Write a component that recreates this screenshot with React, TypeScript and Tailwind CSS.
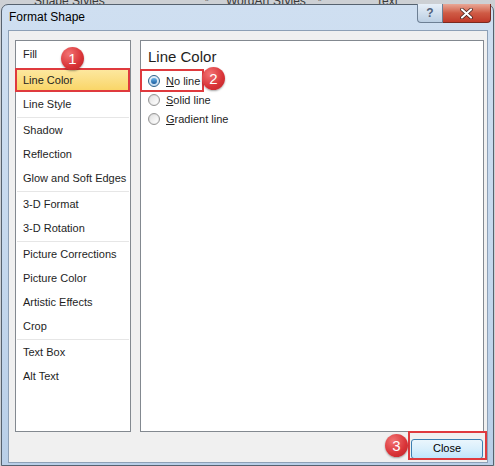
import React from "react";

const groups: string[][] = [
  ["Fill", "Line Color", "Line Style"],
  ["Shadow", "Reflection", "Glow and Soft Edges"],
  ["3-D Format", "3-D Rotation"],
  ["Picture Corrections", "Picture Color", "Artistic Effects", "Crop"],
  ["Text Box", "Alt Text"],
];

function Badge({ n, className }: { n: string; className: string }) {
  return (
    <div
      className={`absolute w-[23px] h-[23px] rounded-full flex items-center justify-center text-white text-[15px] leading-none shadow-[0_1px_2px_rgba(0,0,0,0.35)] bg-[radial-gradient(circle_at_35%_30%,#f27373,#d83236_60%,#b8252a)] ${className}`}
    >
      {n}
    </div>
  );
}

function Radio({ checked }: { checked?: boolean }) {
  if (checked) {
    return (
      <span className="w-[12px] h-[12px] rounded-full border border-[#2c628b] bg-gradient-to-b from-[#e6f0fa] to-[#c4dcf0] flex items-center justify-center shrink-0">
        <span className="w-[6px] h-[6px] rounded-full bg-gradient-to-b from-[#6ab6ea] to-[#1a5c9e]" />
      </span>
    );
  }
  return (
    <span className="w-[12px] h-[12px] rounded-full border border-[#979797] bg-gradient-to-br from-[#d5d5d5] to-[#f4f4f4] flex items-center justify-center shrink-0">
      <span className="w-[8px] h-[8px] rounded-full bg-gradient-to-br from-[#e2e2e2] to-[#ffffff]" />
    </span>
  );
}

export default function App() {
  return (
    <div
      className="relative w-[495px] h-[466px] overflow-hidden bg-[#cdd0d4]"
      style={{ fontFamily: '"Liberation Sans", Arial, sans-serif' }}
    >
      {/* ribbon labels behind the dialog */}
      <div className="absolute top-[-8px] left-0 w-full h-[14px] text-[12px] text-[#3a3a3a]">
        <span className="absolute left-[34px]">Shape Styles</span>
        <span className="absolute left-[205px] text-[10px]">▫</span>
        <span className="absolute left-[226px]">WordArt Styles</span>
        <span className="absolute left-[318px] text-[10px]">▫</span>
        <span className="absolute left-[376px]">Text</span>
      </div>

      {/* window */}
      <div className="relative ml-[1px] mt-[4px] w-[493px] h-[462px] rounded-t-[7px] border border-[#56626f] bg-gradient-to-b from-[#cfdff1] via-[#c6d9ee] to-[#b9cfe8] flex flex-col">
        {/* title bar */}
        <div className="h-[25px] flex items-start justify-between">
          <span className="ml-[7px] mt-[5px] text-[12px] text-black leading-[14px]">
            Format Shape
          </span>
          <div className="flex mr-[2px] -mt-[1px]">
            <div className="w-[26px] h-[19px] rounded-bl-[4px] border border-[#6d7f94] border-t-0 bg-gradient-to-b from-[#e7eff8] to-[#bccfe3] flex items-center justify-center text-[12px] font-bold text-[#50607a] leading-none">
              ?
            </div>
            <div className="w-[48px] h-[19px] rounded-br-[4px] border border-[#7a2a21] border-l-0 border-t-0 bg-gradient-to-b from-[#e8a796] via-[#cf5b45] to-[#c0392a] flex items-center justify-center">
              <svg width="13" height="11" viewBox="0 0 13 11">
                <path
                  d="M2 1.5 L11 9.5 M11 1.5 L2 9.5"
                  stroke="#3a1b17"
                  strokeWidth="3.6"
                  strokeLinecap="round"
                />
                <path
                  d="M2 1.5 L11 9.5 M11 1.5 L2 9.5"
                  stroke="#ffffff"
                  strokeWidth="2.2"
                  strokeLinecap="round"
                />
              </svg>
            </div>
          </div>
        </div>

        {/* client area */}
        <div className="ml-[6px] w-[480px] h-[433px] border border-[#8da0b6] bg-[#f0f0f0] flex flex-col pt-[9px] pl-[6px] pr-[3px]">
          <div className="flex gap-[9px] h-[392px]">
            {/* categories */}
            <div className="relative w-[116px] h-full border border-[#838990] bg-white pt-[1px] text-[11px] text-[#1e1e1e]">
              {groups.map((g, gi) => (
                <div
                  key={gi}
                  className={
                    gi < groups.length - 1
                      ? "pb-[1px] border-b border-[#e6e6e6] mx-[1px]"
                      : "mx-[1px]"
                  }
                >
                  {g.map((item) => {
                    const sel = item === "Line Color";
                    return (
                      <div
                        key={item}
                        className={`relative h-[24px] flex items-center pl-[6px] ${
                          sel
                            ? "mt-[2px] -mx-[1px] pl-[7px] bg-gradient-to-b from-[#fde9a3] to-[#f9d461]"
                            : ""
                        }`}
                      >
                        {item}
                        {sel && (
                          <div className="absolute left-[-1px] top-0 w-[115px] h-[24px] border-2 border-[#df3a3e]" />
                        )}
                      </div>
                    );
                  })}
                </div>
              ))}
              <Badge n="1" className="left-[45px] top-[6px]" />
            </div>

            {/* options */}
            <div className="relative flex-1 h-full border border-[#838990] bg-white pl-[7px] pt-[7px]">
              <div className="text-[15px] leading-[18px] text-[#1e1e1e]">
                Line Color
              </div>
              <div className="mt-[9px] flex flex-col gap-[7px] text-[11px] text-[#1e1e1e]">
                <label className="relative flex items-center gap-[6px] h-[12px]">
                  <Radio checked />
                  <span>
                    <span className="underline">N</span>o line
                  </span>
                  <div className="absolute left-[-8px] top-[-6px] w-[64px] h-[23px] border-2 border-[#df3a3e]" />
                </label>
                <label className="flex items-center gap-[6px] h-[12px]">
                  <Radio />
                  <span>
                    <span className="underline">S</span>olid line
                  </span>
                </label>
                <label className="flex items-center gap-[6px] h-[12px]">
                  <Radio />
                  <span>
                    <span className="underline">G</span>radient line
                  </span>
                </label>
              </div>
              <Badge n="2" className="left-[61px] top-[26px]" />
            </div>
          </div>

          {/* footer */}
          <div className="relative flex justify-end pt-[3px] pr-[1px]">
            <div className="relative">
              <button className="w-[72px] h-[20px] rounded-[3px] border border-[#3c7fb1] bg-gradient-to-b from-[#eaf6fd] via-[#d9effc] to-[#bee6fd] text-[11px] text-black leading-none">
                Close
              </button>
              <div className="absolute left-[-3px] top-[-4px] w-[79px] h-[29px] border-2 border-[#df3a3e]" />
              <Badge n="3" className="left-[-26px] top-[-1px]" />
            </div>
          </div>
        </div>
      </div>
    </div>
  );
}
